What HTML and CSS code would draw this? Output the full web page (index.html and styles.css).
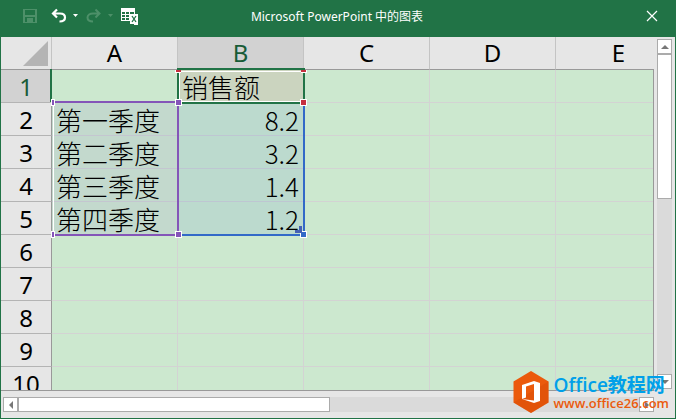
FILE: index.html
```html
<!DOCTYPE html>
<html lang="zh-CN">
<head>
<meta charset="utf-8">
<title>Microsoft PowerPoint 中的图表</title>
<link rel="stylesheet" href="styles.css">
</head>
<body>
<header class="titlebar">
  <div class="tools">
    <button class="tool tool-save" aria-label="保存" disabled><svg width="16" height="16" viewBox="0 0 16 16" shape-rendering="crispEdges"><path d="M1 1h14v14H1zM3 2v5h10V2zM3 9v5h2v-4h6v4h2V9z" fill="currentColor" fill-rule="evenodd"/><path d="M6 12h2v2H6z" fill="currentColor"/></svg></button>
    <button class="tool tool-undo" aria-label="撤消"><svg width="28" height="16" viewBox="0 0 28 16"><path d="M6 1.500 2 5.500l4 4M2.500 5.500H9c3 0 5 1.500 5 4s-2 4-5.500 4" fill="none" stroke="currentColor" stroke-width="2.200"/><path d="M22 6h5l-2.500 3z" fill="currentColor"/></svg></button>
    <button class="tool tool-redo" aria-label="恢复" disabled><svg width="28" height="16" viewBox="0 0 28 16"><path d="m9.500 1.500 4 4-4 4M13 5.500H7c-3 0-5.500 1.500-5.500 4s2 4 5.500 4" fill="none" stroke="currentColor" stroke-width="2"/><path d="M22 6h5l-2.500 3z" fill="currentColor"/></svg></button>
    <button class="tool" aria-label="在 Excel 中编辑数据"><svg width="17" height="17" viewBox="0 0 17 17"><path d="M0 0h14v7H9v6H0z" fill="currentColor"/><path d="M1 4h3v2H1zM5 4h3v2H5zM9 4h4v2H9zM1 7h3v2H1zM5 7h3v2H5zM1 10h3v2H1zM5 10h3v2H5z" fill="#217346"/><path d="M9 6h8v11h-4v-1H9z" fill="currentColor"/><path d="m11 8 4 6m0-6-4 6" stroke="#217346" stroke-width="1.300"/></svg></button>
  </div>
  <h1 class="title">Microsoft PowerPoint 中的图表</h1>
  <button class="close" aria-label="关闭"><svg width="12" height="12" viewBox="0 0 12 12"><path d="m1 1 10 10M11 1 1 11" stroke="currentColor" stroke-width="1.200"/></svg></button>
</header>
<main class="workbook">
  <div class="sheet">
    <table class="grid">
      <colgroup><col class="col-num"><col><col><col><col><col></colgroup>
      <thead>
        <tr><th class="corner"><svg width="25" height="25" viewBox="0 0 25 25"><path d="M25 0v25H0z" fill="#b4b4b4"/></svg></th><th>A</th><th class="active">B</th><th>C</th><th>D</th><th>E</th></tr>
      </thead>
      <tbody>
        <tr><th class="active">1</th><td></td><td class="series">销售额</td><td></td><td></td><td></td></tr>
        <tr><th>2</th><td class="cat">第一季度</td><td class="val">8.2</td><td></td><td></td><td></td></tr>
        <tr><th>3</th><td class="cat">第二季度</td><td class="val">3.2</td><td></td><td></td><td></td></tr>
        <tr><th>4</th><td class="cat">第三季度</td><td class="val">1.4</td><td></td><td></td><td></td></tr>
        <tr><th>5</th><td class="cat">第四季度</td><td class="val">1.2</td><td></td><td></td><td></td></tr>
        <tr><th>6</th><td></td><td></td><td></td><td></td><td></td></tr>
        <tr><th>7</th><td></td><td></td><td></td><td></td><td></td></tr>
        <tr><th>8</th><td></td><td></td><td></td><td></td><td></td></tr>
        <tr><th>9</th><td></td><td></td><td></td><td></td><td></td></tr>
        <tr><th>10</th><td></td><td></td><td></td><td></td><td></td></tr>
      </tbody>
    </table>
    <svg class="ranges" width="310" height="206" viewBox="0 0 310 206" shape-rendering="crispEdges">
      <path d="M178 34h124v30H178z" fill="none" stroke="#fff"/>
      <path d="M50 32v33" stroke="#217346" stroke-width="2"/>
      <path d="M52.500 196V67" fill="none" stroke="#fff"/>
      <path d="M177 198h126V66" fill="none" stroke="#3269c8" stroke-width="2"/>
      <path d="M51 65h126v133H51" fill="none" stroke="#8455b8" stroke-width="2"/>
      <path d="M177 32h126v34H177z" fill="none" stroke="#217346" stroke-width="2"/>
      <path d="M174 33h6v3h-6zM300 33h6v3h-6zM299 62h7v7h-7zM174 62h7v7h-7zM50 62h4v7h-4zM174 194h7v7h-7zM50 194h4v7h-4zM299 194h7v7h-7z" fill="#fff"/>
      <path d="M175 33h5v2h-5zM300 33h5v2h-5zM300 63h5v5h-5z" fill="#c5303e"/>
      <path d="M175 63h5v5h-5zM51 63h2v5h-2zM175 195h5v5h-5zM51 195h2v5h-2z" fill="#8455b8"/>
      <path d="M300 195h5v5h-5z" fill="#3269c8"/>
      <path d="M298 189h3v7h-7v-3h4z" fill="#4560b4"/>
    </svg>
  </div>
  <div class="scroll scroll-v">
    <button aria-label="向上滚动"><svg width="8" height="4" viewBox="0 0 8 4"><path d="M4 0l4 4H0z" fill="#777"/></svg></button>
    <div class="thumb"></div>
    <div class="track"></div>
    <button aria-label="向下滚动"><svg width="8" height="4" viewBox="0 0 8 4"><path d="M0 0h8L4 4z" fill="#777"/></svg></button>
  </div>
  <div class="scroll scroll-h">
    <button aria-label="向左滚动"><svg width="4" height="8" viewBox="0 0 4 8"><path d="M4 0v8L0 4z" fill="#777"/></svg></button>
    <div class="thumb"></div>
    <div class="track"></div>
    <button aria-label="向右滚动"><svg width="4" height="8" viewBox="0 0 4 8"><path d="M0 0l4 4-4 4z" fill="#777"/></svg></button>
  </div>
</main>
<aside class="watermark">
  <svg width="36" height="42" viewBox="0 0 36 42"><path d="M18 0l17.500 10.500v21L18 42 .5 31.500v-21z" fill="#eb5a0c"/><path d="M18 42 .5 31.500l35-21v21z" fill="#d94b05" opacity=".5"/><path d="M9 14l12-4 6 2v18l-6 2-12-4 12 1.500V13l-8 2.500v11L9 28z" fill="#fff"/></svg>
  <div>
    <div class="brand">Office教程网</div>
    <div class="url">www.office26.com</div>
  </div>
</aside>
</body>
</html>
```
FILE: styles.css
```css
* { box-sizing: border-box; }

body {
  display: flex;
  flex-direction: column;
  height: 100vh;
  margin: 0;
  overflow: hidden;
  position: relative;
  border: 1px solid #217346;
  border-top: 0;
  background: #e6e6e6;
  font-family: "Noto Sans", "Noto Sans CJK SC", sans-serif;
}

button {
  display: flex;
  align-items: center;
  justify-content: center;
  margin: 0;
  padding: 0;
  border: 0;
  background: none;
  color: inherit;
}

.titlebar {
  display: grid;
  grid-template-columns: 1fr auto 1fr;
  align-items: center;
  flex: none;
  height: 37px;
  padding: 0 17px 5px 21px;
  background: #217346;
  color: #fff;
}

.tools { display: flex; gap: 7px; }
.tool:disabled { color: #4d9069; }
.tool-save { margin-right: 6px; }

.title {
  margin: 2px 6px 0 0;
  font-size: 12px;
  font-weight: 400;
  line-height: 18px;
}

.close { justify-self: end; }

.workbook {
  display: grid;
  flex: 1;
  min-height: 0;
  grid-template-columns: minmax(0, 1fr) 21px;
  grid-template-rows: minmax(0, 1fr) 27px;
}

.sheet {
  position: relative;
  overflow: hidden;
  border-bottom: 1px solid #999;
}

.sheet::after {
  content: "";
  position: absolute;
  top: 32px;
  right: 0;
  bottom: 0;
  width: 1px;
  background: #999;
}

.grid {
  width: 681px;
  table-layout: fixed;
  border-collapse: separate;
  border-spacing: 0;
}

.col-num { width: 51px; }

th, td {
  height: 33px;
  padding: 0;
  line-height: 32px;
  white-space: nowrap;
}

th {
  border-right: 1px solid #999;
  border-bottom: 1px solid #b4b4b4;
  background: #e6e6e6;
  font-size: 24px;
  font-weight: 400;
}

tbody th, tbody td {
  padding-top: 2px;
  line-height: 30px;
}

thead th {
  border-right-color: #c4c4c4;
  border-bottom-color: #999;
}

th.active { background: #d2d2d2; color: #185c37; }

.corner {
  padding: 0 3px 0 0;
  text-align: right;
  vertical-align: middle;
}

.corner svg { display: block; margin-left: auto; }

td {
  border-right: 1px solid #d3d3d3;
  border-bottom: 1px solid #d3d3d3;
  background: #cce8cf;
  font-family: "Noto Sans CJK SC", sans-serif;
  font-size: 26px;
  font-weight: 300;
}

.series { padding-left: 4px; background: #cbd4bf; }
.cat { padding-left: 4px; background: #c3d9cd; border-color: #c4c6d0; }
.val { padding-right: 4px; background: #bcdace; border-color: #bec6d2; text-align: right; }

.ranges { position: absolute; top: 0; left: 0; }

.scroll { display: flex; }

.scroll button {
  flex: none;
  width: 15px;
  height: 15px;
  border: 1px solid #ababab;
  background: #fff;
}

.thumb { flex: 1; border: 1px solid #ababab; background: #fff; }
.track { flex: 1; background: #dadada; }

.scroll-v { flex-direction: column; padding: 2px 3px; }
.scroll-v .thumb { flex-grow: 9; }
.scroll-v .track { flex-grow: 11; }

.scroll-h { padding: 6px 0 6px 2px; }

.watermark {
  position: absolute;
  right: 6px;
  bottom: 5px;
  display: flex;
  align-items: center;
  gap: 5px;
}

.brand {
  color: #00a0e9;
  font-family: "Open Sans", "Noto Sans CJK SC", sans-serif;
  font-size: 19px;
  font-weight: 600;
  line-height: 22px;
}

.url {
  color: #eb5a0c;
  font-family: "Open Sans", sans-serif;
  font-size: 13px;
  font-weight: 600;
  line-height: 14px;
}
```
